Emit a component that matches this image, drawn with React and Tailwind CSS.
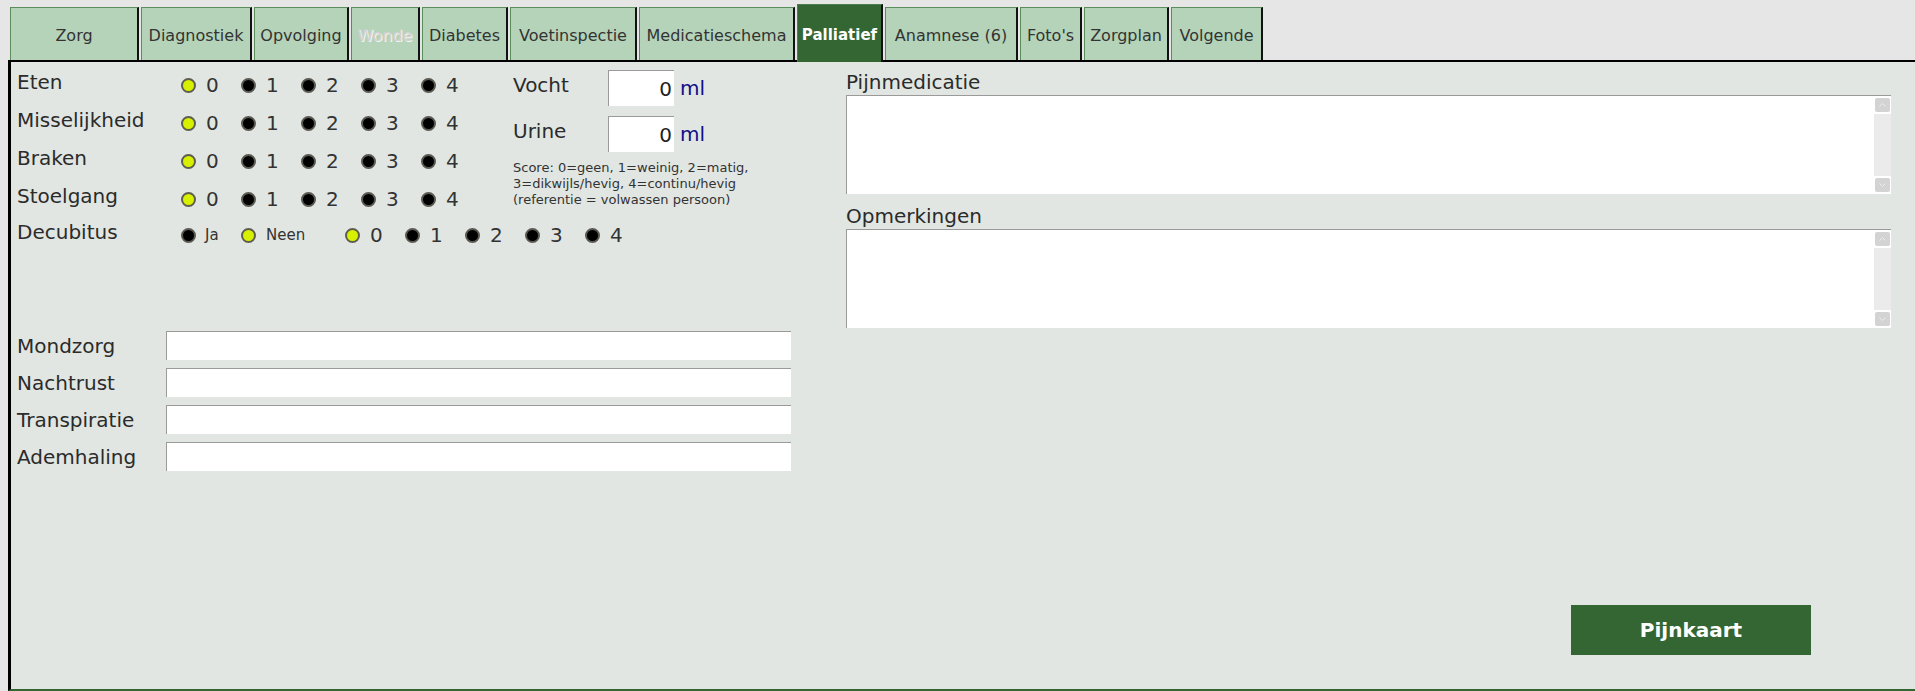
import React from 'react';

const tabs = [
  { label: 'Zorg', w: 'w-[129px]' },
  { label: 'Diagnostiek', w: 'w-[111px]' },
  { label: 'Opvolging', w: 'w-[95px]' },
  { label: 'Wonde', w: 'w-[69px]', disabled: true },
  { label: 'Diabetes', w: 'w-[86px]' },
  { label: 'Voetinspectie', w: 'w-[127px]' },
  { label: 'Medicatieschema', w: 'w-[156px]' },
  { label: 'Palliatief', w: 'w-[86px]', active: true },
  { label: 'Anamnese (6)', w: 'w-[133px]' },
  { label: "Foto's", w: 'w-[62px]' },
  { label: 'Zorgplan', w: 'w-[85px]' },
  { label: 'Volgende', w: 'w-[92px]' },
];

const scoreRows = ['Eten', 'Misselijkheid', 'Braken', 'Stoelgang'];
const textRows = ['Mondzorg', 'Nachtrust', 'Transpiratie', 'Ademhaling'];

const Radio = ({ on }) => (
  <span
    className={
      on
        ? 'w-[15px] h-[15px] rounded-full border-2 border-[#5e5e50] bg-[#d6f000] shrink-0'
        : 'w-[15px] h-[15px] rounded-full border-2 border-[#5a5a52] bg-black shrink-0'
    }
  />
);

const ScoreOptions = ({ selected = 0 }) => (
  <div className="flex">
    {[0, 1, 2, 3, 4].map(n => (
      <div key={n} className="w-[60px] flex items-center gap-[10px]">
        <Radio on={n === selected} />
        <span className="text-[20px] leading-none text-[#333]">{n}</span>
      </div>
    ))}
  </div>
);

// fake scrollbar, the native one does not look like the screenshot
const ScrollBar = () => (
  <div className="w-[18px] flex flex-col items-center py-[2px] gap-[2px]">
    <div className="w-[15px] h-[14px] rounded-[2px] bg-[#d3d3d3] flex items-center justify-center">
      <svg width="7" height="4" viewBox="0 0 7 4"><path d="M0.5 3.5 L3.5 0.5 L6.5 3.5" fill="none" stroke="#ececec" strokeWidth="1" /></svg>
    </div>
    <div className="w-[17px] flex-1 bg-[#ebebeb]" />
    <div className="w-[15px] h-[14px] rounded-[2px] bg-[#d3d3d3] flex items-center justify-center">
      <svg width="7" height="4" viewBox="0 0 7 4"><path d="M0.5 0.5 L3.5 3.5 L6.5 0.5" fill="none" stroke="#ececec" strokeWidth="1" /></svg>
    </div>
  </div>
);

const TextBox = () => (
  <div className="h-[99px] bg-white border-t border-l border-[#9a9a9a] flex">
    <textarea className="flex-1 resize-none outline-none bg-white" />
    <ScrollBar />
  </div>
);

const App = () => {
  return (
    <div className="w-[1915px] h-[691px] bg-[#e6e6e6] font-['DejaVu_Sans',sans-serif] text-[#2b2b2b] overflow-hidden">
      {/* tabs */}
      <div className="h-[60px] flex items-end pl-[10px] gap-[2px]">
        {tabs.map(t =>
          t.active ? (
            <div
              key={t.label}
              className={`${t.w} h-[58px] -mb-[2px] relative z-10 bg-[#336633] border-l border-t border-[#4d7d4d] border-r-2 border-r-[#111] flex items-center justify-center pt-[3px] text-[15px] font-bold text-white`}
            >
              {t.label}
            </div>
          ) : (
            <div
              key={t.label}
              className={`${t.w} h-[53px] bg-[#b5d3b9] border-l border-t border-[#5b8c5b] border-r-2 border-r-[#111] flex items-center justify-center pt-[3px] text-[16px] whitespace-nowrap ${t.disabled ? 'text-[#d2d2d2] [text-shadow:1px_1px_0_#f4f4f4]' : 'text-[#333]'}`}
            >
              {t.label}
            </div>
          )
        )}
      </div>

      {/* content */}
      <div className="ml-[8px] h-[631px] bg-[#e1e6e2] border-l-[3px] border-t-2 border-black border-b-2 border-b-[#336633] flex pl-[6px] pt-[4px]">
        {/* left column */}
        <div className="w-[829px] flex flex-col">
          <div className="flex">
            <div className="w-[496px] flex flex-col">
              {scoreRows.map(r => (
                <div key={r} className="h-[38px] flex items-center">
                  <span className="w-[164px] text-[20px] leading-[24px] pb-[6px]">{r}</span>
                  <ScoreOptions />
                </div>
              ))}
            </div>
            <div className="flex flex-col pt-[4px]">
              <div className="flex items-center h-[36px]">
                <span className="w-[95px] text-[20px] leading-[24px] pb-[6px]">Vocht</span>
                <input readOnly value="0" className="w-[66px] h-[36px] bg-white border-t border-l border-[#9a9a9a] text-right pr-[2px] text-[20px] text-[#222] outline-none" />
                <span className="ml-[6px] text-[20px] text-[#10108a]">ml</span>
              </div>
              <div className="flex items-center h-[36px] mt-[10px]">
                <span className="w-[95px] text-[20px] leading-[24px] pb-[6px]">Urine</span>
                <input readOnly value="0" className="w-[66px] h-[36px] bg-white border-t border-l border-[#9a9a9a] text-right pr-[2px] text-[20px] text-[#222] outline-none" />
                <span className="ml-[6px] text-[20px] text-[#10108a]">ml</span>
              </div>
              <div className="mt-[8px] text-[13px] leading-[16px] text-[#333]">
                <div>Score: 0=geen, 1=weinig, 2=matig,</div>
                <div>3=dikwijls/hevig, 4=continu/hevig</div>
                <div>(referentie = volwassen persoon)</div>
              </div>
            </div>
          </div>

          <div className="h-[34px] flex items-center">
            <span className="w-[164px] text-[20px] leading-[24px] pb-[6px]">Decubitus</span>
            <div className="w-[60px] flex items-center gap-[9px]">
              <Radio on={false} />
              <span className="text-[15px] text-[#333]">Ja</span>
            </div>
            <div className="w-[104px] flex items-center gap-[10px]">
              <Radio on />
              <span className="text-[15px] text-[#333]">Neen</span>
            </div>
            <ScoreOptions />
          </div>

          <div className="mt-[79px] flex flex-col gap-[8px]">
            {textRows.map(r => (
              <div key={r} className="flex items-center h-[29px]">
                <span className="w-[149px] text-[20px] leading-[24px]">{r}</span>
                <input className="w-[625px] h-[29px] bg-white border-t border-l border-[#9a9a9a] outline-none" />
              </div>
            ))}
          </div>
        </div>

        {/* right column */}
        <div className="w-[1045px] flex flex-col pt-[4px]">
          <div className="text-[20px] leading-[24px] mb-[1px]">Pijnmedicatie</div>
          <TextBox />
          <div className="text-[20px] leading-[24px] mt-[10px] mb-[1px]">Opmerkingen</div>
          <TextBox />
          <button className="self-end mr-[80px] mt-[277px] w-[240px] h-[50px] bg-[#336633] text-white font-bold text-[20px]">
            Pijnkaart
          </button>
        </div>
      </div>
    </div>
  );
};

export default App;
